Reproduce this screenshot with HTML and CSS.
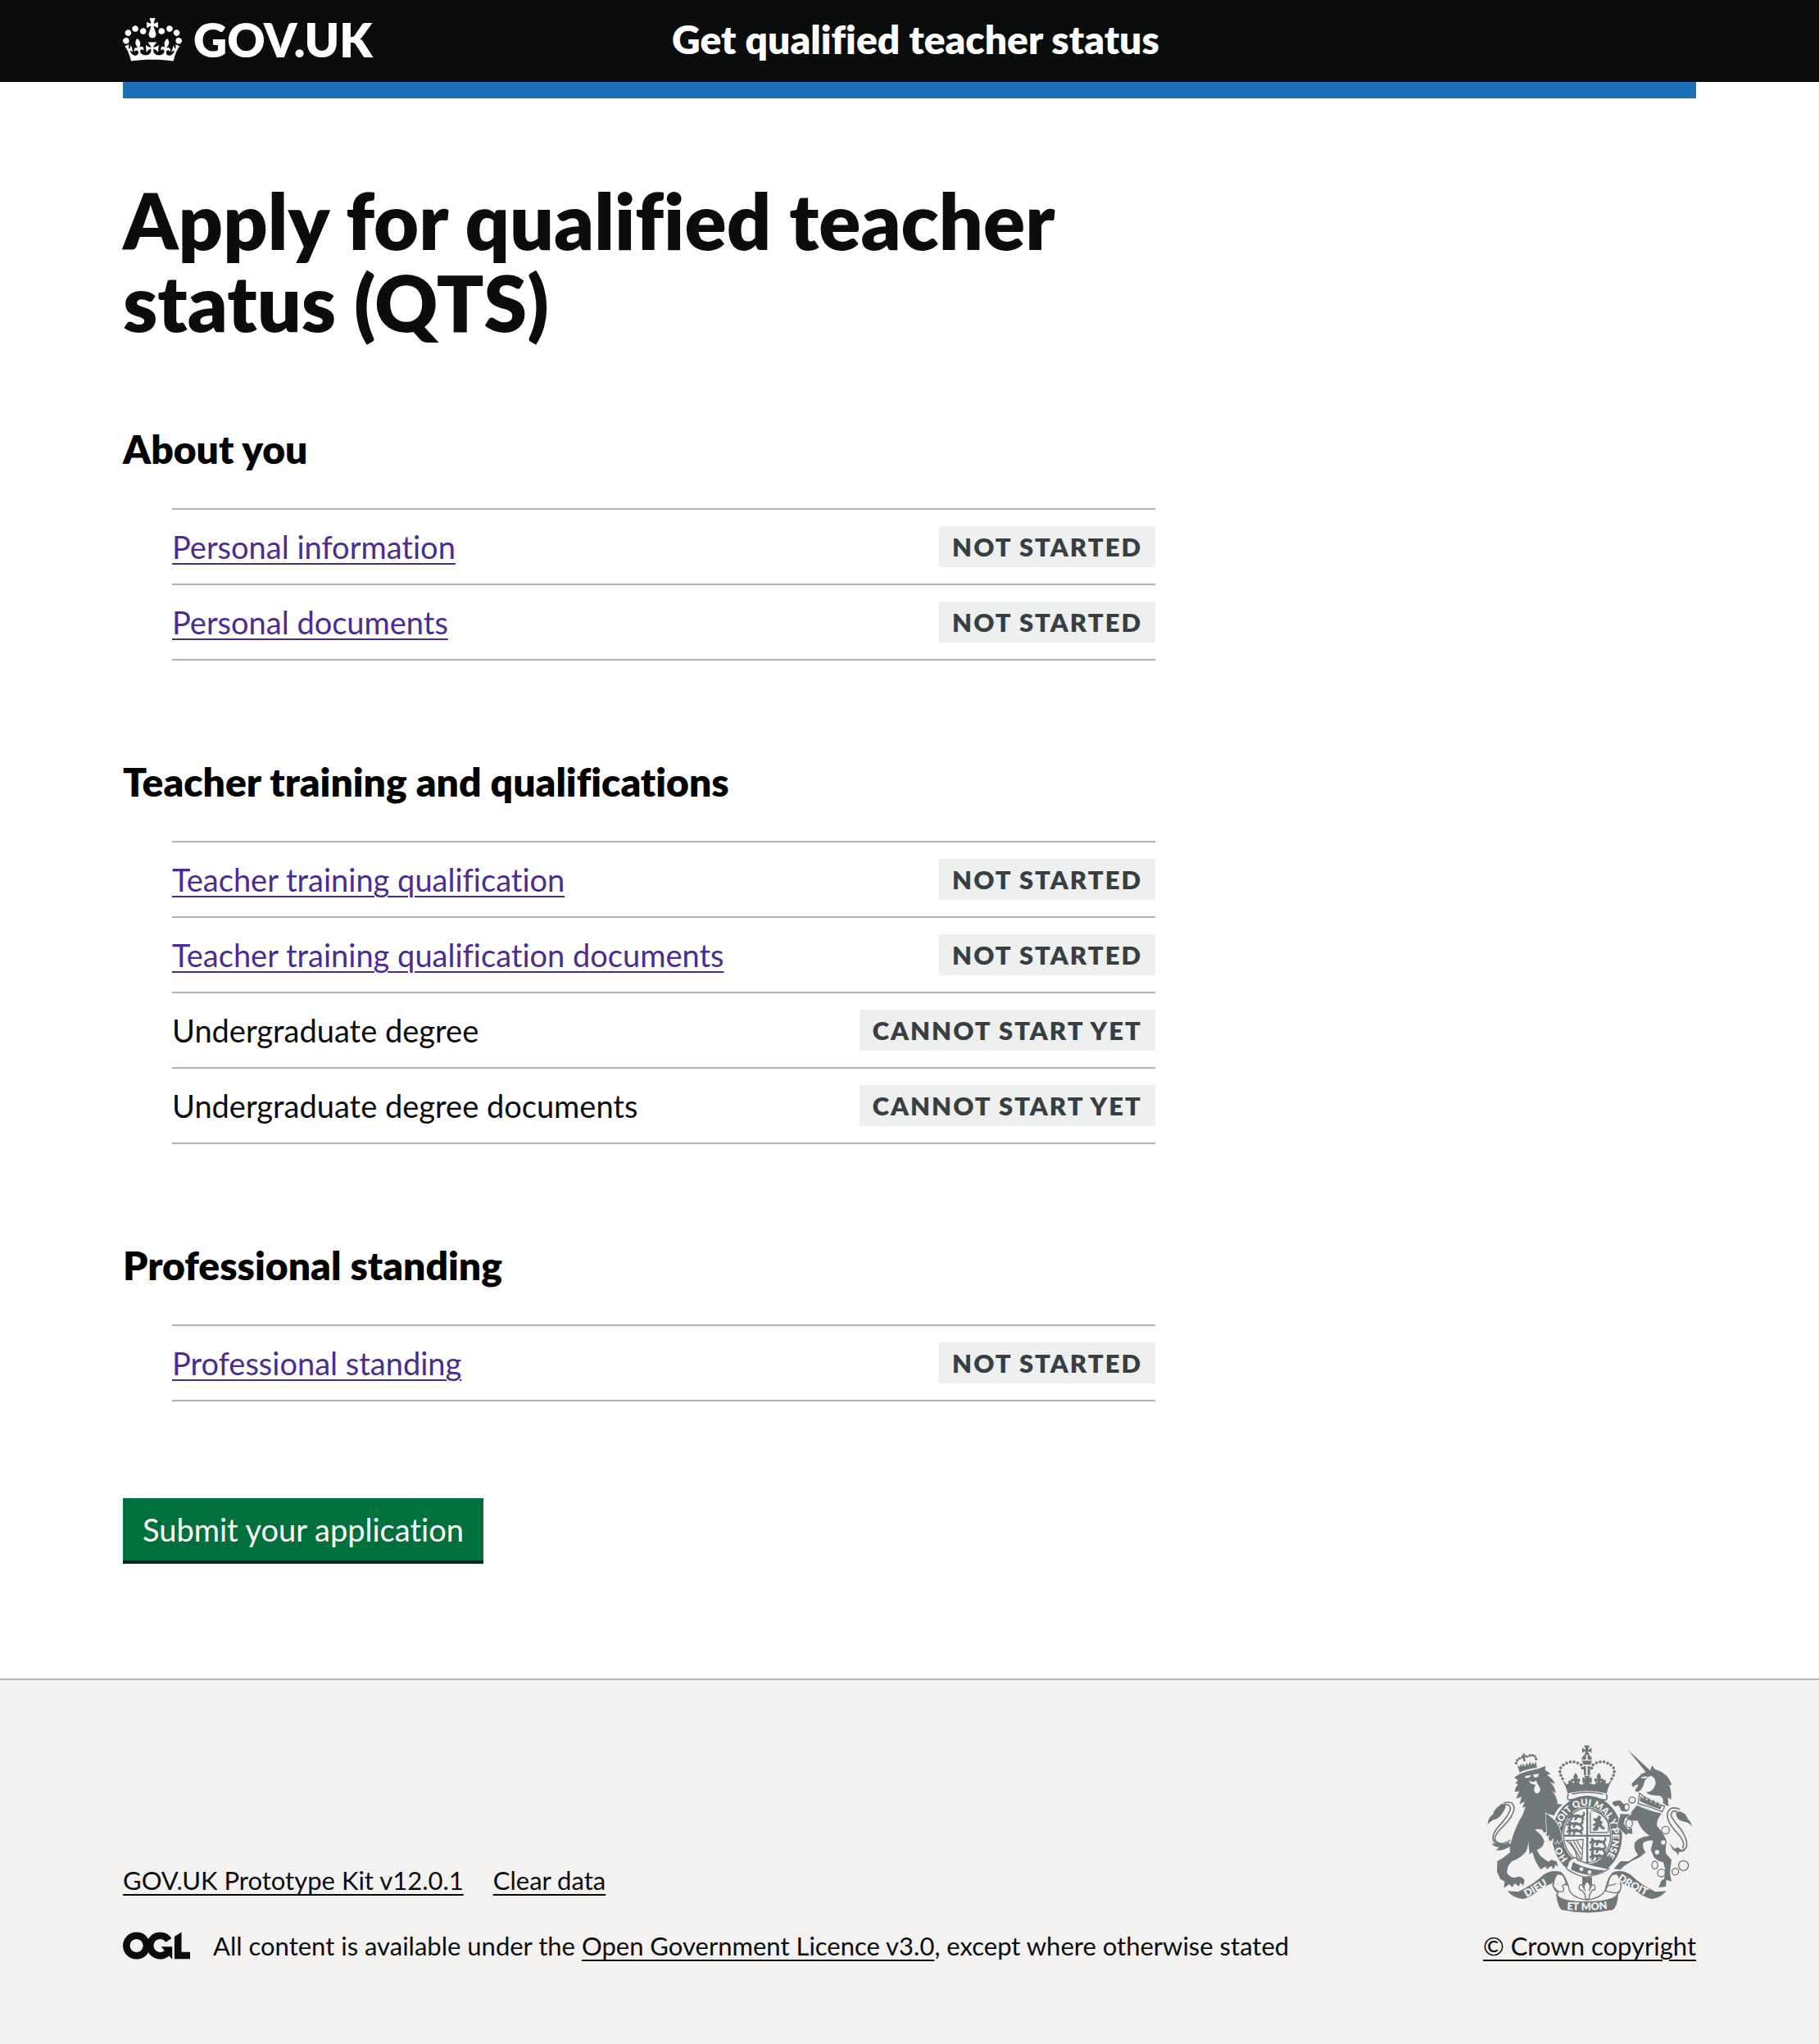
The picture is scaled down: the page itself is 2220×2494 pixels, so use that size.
FILE: index.html
```html
<!DOCTYPE html>
<html lang="en">
<head>
<meta charset="utf-8">
<meta name="viewport" content="width=device-width, initial-scale=1">
<title>Apply for qualified teacher status (QTS)</title>
<link rel="stylesheet" href="styles.css">
</head>
<body>
<header class="header">
  <div class="container header-row">
    <a class="logo" href="#">
      <svg class="logo-crown" viewBox="0 0 132 97" aria-hidden="true"><path fill="currentColor" d="M25 30.2c3.5 1.5 7.7-.2 9.1-3.7 1.5-3.6-.2-7.8-3.9-9.2-3.6-1.4-7.6.3-9.1 3.9-1.4 3.5.3 7.5 3.9 9zM9 39.5c3.6 1.5 7.8-.2 9.2-3.7 1.5-3.6-.2-7.8-3.9-9.1-3.6-1.5-7.6.2-9.1 3.8-1.4 3.5.3 7.5 3.8 9zM4.4 57.2c3.5 1.5 7.7-.2 9.1-3.8 1.5-3.6-.2-7.7-3.9-9.1-3.5-1.5-7.6.3-9.1 3.8-1.4 3.5.3 7.6 3.9 9.1zm38.3-21.4c3.5 1.5 7.7-.2 9.1-3.8 1.5-3.6-.2-7.7-3.9-9.1-3.6-1.5-7.6.3-9.1 3.8-1.3 3.6.4 7.7 3.9 9.1zm64.4-5.6c-3.6 1.5-7.8-.2-9.1-3.7-1.5-3.6.2-7.8 3.8-9.2 3.6-1.4 7.7.3 9.2 3.9 1.3 3.5-.4 7.5-3.9 9zm15.9 9.3c-3.6 1.5-7.7-.2-9.1-3.7-1.5-3.6.2-7.8 3.7-9.1 3.6-1.5 7.7.2 9.2 3.8 1.5 3.5-.3 7.5-3.8 9zm4.7 17.7c-3.6 1.5-7.8-.2-9.2-3.8-1.5-3.6.2-7.7 3.9-9.1 3.6-1.5 7.7.3 9.2 3.8 1.3 3.5-.4 7.6-3.9 9.1zM89.3 35.8c-3.6 1.5-7.8-.2-9.2-3.8-1.4-3.6.2-7.7 3.9-9.1 3.6-1.5 7.7.3 9.2 3.8 1.4 3.6-.3 7.7-3.9 9.1zM69.7 17.7l8.9 4.7V9.3l-8.9 2.8c-.2-.3-.5-.6-.9-.9L72.4 0H59.6l3.5 11.2c-.3.3-.6.5-.9.9l-8.8-2.8v13.1l8.8-4.7c.3.3.6.7.9.9l-5 15.4v.1c-.2.8-.4 1.6-.4 2.4 0 4.1 3.1 7.5 7 8.1h.2c.3 0 .7.1 1 .1.4 0 .7 0 1-.1h.2c4-.6 7.1-4.1 7.1-8.1 0-.8-.1-1.7-.4-2.4V34l-5.1-15.4c.4-.2.7-.6 1-.9zM66 92.8c16.9 0 32.8 1.1 47.1 3.2 4-16.9 8.9-26.7 14-33.5l-9.6-3.4c1 4.9 1.1 7.2 0 10.2-1.5-1.4-3-4.3-4.2-8.7L108.6 76c2.8-2 5-3.2 7.5-3.3-4.4 9.4-10 11.9-13.6 11.2-4.3-.8-6.3-4.6-5.6-7.9 1-4.7 5.7-5.9 8-.5 4.3-8.7-3-11.4-7.6-8.8 7.1-7.2 7.9-13.5 2.1-21.1-8 6.1-8.1 12.3-4.5 20.8-4.7-5.4-12.1-2.5-9.5 6.2 3.4-5.2 7.9-2 7.2 3.1-.6 4.3-6.4 7.8-13.5 7.2-10.3-.9-10.9-8-11.2-13.8 2.5-.5 7.1 1.8 11 7.3L80.2 60c-4.1 4.4-8 5.3-12.3 5.4 1.4-4.4 8-11.6 8-11.6H55.5s6.4 7.2 7.9 11.6c-4.2-.1-8-1-12.3-5.4l1.4 16.4c3.9-5.5 8.5-7.7 10.9-7.3-.3 5.8-.9 12.8-11.1 13.8-7.2.6-12.9-2.9-13.5-7.2-.7-5 3.8-8.3 7.1-3.1 2.7-8.7-4.6-11.6-9.4-6.2 3.7-8.5 3.6-14.7-4.6-20.8-5.8 7.6-5 13.9 2.2 21.1-4.7-2.6-11.9.1-7.7 8.8 2.3-5.5 7.1-4.2 8.1.5.7 3.3-1.3 7.1-5.7 7.9-3.5.7-9-1.8-13.5-11.2 2.5.1 4.7 1.3 7.5 3.3l-4.7-15.4c-1.2 4.4-2.7 7.2-4.3 8.7-1.1-3-.9-5.3 0-10.2l-9.5 3.4c5 6.9 9.9 16.7 14 33.5 14.8-2.1 30.8-3.2 47.7-3.2z"/></svg>
      <span class="logo-text">GOV.UK</span>
    </a>
    <a class="service-name" href="#">Get qualified teacher status</a>
  </div>
</header>
<div class="container"><div class="header-bar"></div></div>

<main class="container main">
  <div class="column">
    <h1 class="title">Apply for qualified teacher status (QTS)</h1>

    <section class="section">
      <h2 class="section-title">About you</h2>
      <ul class="tasks">
        <li class="task"><a class="task-link" href="#">Personal information</a><strong class="tag">Not started</strong></li>
        <li class="task"><a class="task-link" href="#">Personal documents</a><strong class="tag">Not started</strong></li>
      </ul>
    </section>

    <section class="section">
      <h2 class="section-title">Teacher training and qualifications</h2>
      <ul class="tasks">
        <li class="task"><a class="task-link" href="#">Teacher training qualification</a><strong class="tag">Not started</strong></li>
        <li class="task"><a class="task-link" href="#">Teacher training qualification documents</a><strong class="tag">Not started</strong></li>
        <li class="task"><span>Undergraduate degree</span><strong class="tag">Cannot start yet</strong></li>
        <li class="task"><span>Undergraduate degree documents</span><strong class="tag">Cannot start yet</strong></li>
      </ul>
    </section>

    <section class="section">
      <h2 class="section-title">Professional standing</h2>
      <ul class="tasks">
        <li class="task"><a class="task-link" href="#">Professional standing</a><strong class="tag">Not started</strong></li>
      </ul>
    </section>

    <button class="button" type="submit">Submit your application</button>
  </div>
</main>

<footer class="footer">
  <div class="container footer-row">
    <div class="footer-meta">
      <ul class="footer-links">
        <li><a class="footer-link" href="#">GOV.UK Prototype Kit v12.0.1</a></li>
        <li><a class="footer-link" href="#">Clear data</a></li>
      </ul>
      <div class="licence">
        <svg class="licence-logo" viewBox="0 0 483.2 195.7" aria-hidden="true"><path fill="currentColor" d="M421.5 142.8V.1l-50.7 32.3v161.1h112.4v-50.7zm-122.3-9.6A47.12 47.12 0 0 1 221 97.8c0-26 21.1-47.1 47.1-47.1 16.7 0 31.4 8.7 39.7 21.8l42.7-27.2A97.63 97.63 0 0 0 268.1 0c-36.5 0-68.3 20.1-85.1 49.7A98 98 0 0 0 97.8 0C43.9 0 0 43.9 0 97.8s43.9 97.8 97.8 97.8c36.5 0 68.3-20.1 85.1-49.7a97.76 97.76 0 0 0 149.6 25.4l19.4 22.2h3v-87.8h-80l24.3 27.5zM97.8 145c-26 0-47.1-21.1-47.1-47.1s21.1-47.1 47.1-47.1 47.1 21.1 47.1 47.1S123.8 145 97.8 145"/></svg>
        <span>All content is available under the <a class="footer-link" href="#">Open Government Licence v3.0</a>, except where otherwise stated</span>
      </div>
    </div>
    <a class="copyright" href="#">
      <svg class="crest" viewBox="102 93 750 612" aria-hidden="true">
        <defs>
          <path id="garter" d="M398 508A97 113 0 1 1 510 525"/>
          <path id="scroll-left" d="M246 648Q300 620 352 582"/>
          <path id="scroll-mid" d="M374 691Q468 701 562 688"/>
          <path id="scroll-right" d="M578 584Q640 624 704 652"/>
          <g id="cross"><path d="M-5 0Q-5-9-11-17H11Q5-9 5 0Q9-1 17-10V11Q9 4 5 4Q5 10 10 18H-10Q-5 10-5 4Q-9 4-17 11V-10Q-9-1-5 0Z"/></g>
          <g id="fleur"><path d="M0-20Q13-8 5 4Q14-4 17 5Q17 14 10 12Q8 7 5 11L8 24H-8L-5 11Q-8 7-10 12Q-17 14-17 5Q-14-4-5 4Q-13-8 0-20Z"/></g>
          <g id="beast"><path d="M0 8L8 2L7-6L15-8L20 0L38-2L50 3L58-5L55-11H62L64 0L58 9L62 18L53 19L50 12L36 10L31 20H23L27 12L20 8L15 20H6L11 10L5 14Z"/></g>
        </defs>
        <g class="crest-ink">
          <!-- lion's crown -->
          <path d="M213 163L221 171L225 160L231 169L235 157L240 170L247 155L252 166L259 151L263 164L269 154L274 163L281 151L284 174Q250 177 220 191Z"/>
          <circle cx="208" cy="157" r="5"/><circle cx="212" cy="147" r="5"/><circle cx="220" cy="140" r="5"/><circle cx="229" cy="137" r="4"/><circle cx="249" cy="133" r="4"/><circle cx="258" cy="129" r="5"/><circle cx="268" cy="128" r="5"/><circle cx="277" cy="132" r="5"/><circle cx="281" cy="142" r="5"/>
          <path d="M228 126L234 128L233 121L241 122L239 129L246 127V136L240 135L243 149L235 151L233 136L228 137Z"/>
          <!-- lion -->
          <path d="M201 209L222 196Q258 183 288 178L316 167L314 182L335 196L321 200Q342 213 351 233L332 226Q351 243 353 267L338 258Q357 275 360 306L378 309Q357 324 347 349L317 341Q348 359 364 388L378 434L365 451L358 438L355 451L345 446V432L332 444L326 432L332 420L321 426L316 416L327 407L309 411L304 401Q291 395 277 401Q306 421 311 443Q309 465 285 474Q289 492 310 507L327 518L337 510L356 517L362 536L352 529L345 545L336 533L321 545L316 535L298 546L292 538L278 514L267 482L257 491L252 434Q254 462 243 482Q226 503 193 516Q174 532 175 560Q191 580 207 575Q225 567 239 585L234 606L224 594L218 608L203 597L194 611L183 600L163 614L166 590L151 582L138 555L139 516Q168 500 187 482Q181 466 190 444Q204 392 232 346L243 316L231 320L239 298L221 307L228 280L208 287L219 260L202 262Q204 246 215 234L205 231L215 220Z"/>
          <path d="M103 383Q105 356 123 345Q128 324 152 309Q151 302 165 308L170 318Q155 351 137 361Q115 366 103 383Z"/>
          <path d="M119 448Q127 456 139 447Q159 459 181 446L189 458Q170 477 134 476L146 464Q123 466 119 448Z"/>
          <!-- unicorn -->
          <path d="M617 108L699 184L706 165L716 179Q765 193 778 237L769 238Q779 265 775 290L764 283L766 315Q754 310 745 302Q751 286 733 276Q694 276 684 263Q708 263 718 236Q722 211 701 203Q681 211 677 229Q675 242 664 256L652 263L643 258L650 245L633 242L631 232L668 196L683 190Z"/>
          <path d="M655 306Q692 325 742 339Q721 365 724 386Q755 424 759 444Q754 463 757 488L777 511L771 558L777 590L758 584L756 609L729 612L741 586L750 581L754 548L747 520Q722 514 712 500L701 473L710 441Q689 436 672 451Q673 473 682 483Q665 502 631 515L604 533L590 547L566 544L590 516L621 516L655 493Q637 475 642 449Q657 426 697 423Q666 404 652 367L638 368L608 357L602 378L617 400L632 394L634 416L616 414L612 421L579 389L590 343L627 344L632 333Z"/>
          <path d="M564 296L589 293Q598 307 616 310L616 334L594 333L584 312L570 315L560 305Z"/>
          <path d="M852 389Q842 373 823 371Q800 369 793 345Q794 332 808 334Q829 339 836 361Q848 370 852 389Z"/>
          <path d="M769 449L782 474L795 483L801 495L804 482Q830 484 829 466L814 475L800 465L788 470Z"/>
          <!-- royal crown -->
          <use href="#cross" x="467" y="109"/>
          <path d="M448 144Q450 127 464 126V144ZM470 126Q484 128 486 144H470ZM448 148H486L481 163H455ZM456 168H464V201H456ZM470 168H479V201H470Z"/>
          <path d="M376 218Q388 227 391 234Q405 232 398 224Q407 214 413 226L425 236Q430 221 440 222Q434 234 450 236L458 228L451 208Q468 218 484 207L477 228Q481 236 499 234Q496 214 508 234L520 226Q530 212 538 223Q530 233 545 232Q551 221 560 217Q546 239 540 268Q468 250 397 268Q390 238 376 218Z"/>
          <use href="#fleur" x="426" y="213"/><use href="#fleur" x="511" y="213"/><use href="#cross" x="468" y="220"/>
          <path class="stroke dots" d="M378 214Q360 185 376 168Q408 140 444 161Q454 168 450 184M558 214Q576 185 560 168Q528 140 492 161Q482 168 486 184"/>
          <path class="stroke" d="M400 270Q392 285 401 292L423 289M537 270Q546 285 536 292L514 289M412 270Q468 258 526 270"/>
          <!-- garter and shield -->
          <ellipse cx="468" cy="423" rx="128" ry="147"/>
          <ellipse class="paper" cx="468" cy="421" rx="90" ry="105"/>
          <ellipse class="stroke thin" cx="468" cy="421" rx="86" ry="100"/>
          <path d="M465 318H472V526H465ZM382 419H554V426H382Z"/>
          <use href="#beast" x="397" y="346"/><use href="#beast" x="391" y="374"/><use href="#beast" x="391" y="399"/>
          <use href="#beast" x="475" y="439"/><use href="#beast" x="475" y="466"/><use href="#beast" x="475" y="492"/>
          <path class="stroke thin" d="M480 335V411H543M482 329Q524 337 546 374V411"/>
          <path d="M487 399L497 389L487 382L500 374L488 360L504 358L511 347L520 354L516 366L526 373L520 382L535 396L526 401L512 389L507 403L493 406Z"/>
          <path class="stroke thin" d="M392 440Q420 440 453 436L449 510Q434 513 429 493Q420 461 392 440ZM405 442L445 508M418 441L446 492M430 440L448 471"/>
        </g>
        <g class="crest-text">
          <text font-size="34"><textPath href="#garter">HO</textPath></text>
          <text font-size="34"><textPath href="#garter" startOffset="124">SOIT QUI MAL Y PENSE</textPath></text>
        </g>
        <g class="crest-paper">
          <path d="M243 203L264 201L254 211H239ZM270 199L292 196L287 208L274 209ZM255 219Q269 232 280 220L289 237L297 251Q295 268 284 268Q273 267 274 249L279 236L261 232Z"/>
          <path d="M663 211Q677 202 691 207Q679 217 663 211ZM638 239L656 235L651 247Z"/>
        </g>
        <g class="crest-ink">
          <!-- forelegs that rest on the garter -->
          <path class="limb" d="M317 341Q348 359 364 388L378 434L365 451L358 438L355 451L345 446V432L332 444L326 432L332 420L321 426Z"/>
          <path class="limb" d="M590 343L579 389L612 421L616 414L634 416L632 394L617 400L602 378L608 357L627 344Z"/>
          <path class="stroke" d="M162 304Q196 291 201 321Q200 350 159 390Q123 424 132 440Q150 462 187 439M157 311Q188 302 187 326Q180 350 142 391Q103 439 145 457"/>
          <path class="stroke" d="M808 326Q768 310 762 343Q759 369 791 405Q832 447 817 468M798 335Q777 324 775 350Q788 373 812 400Q842 447 829 470"/>
          <path class="edge" d="M652 309Q695 330 748 340"/>
          <path class="outlined" d="M660 267Q692 295 752 315L743 335Q702 317 655 304Z"/>
          <path d="M664 276L673 287L679 277L685 294L696 285L701 301L712 290L717 308L728 298L732 315L742 309L737 326Q699 315 661 296Z"/>
          <g class="outlined">
            <ellipse cx="633" cy="292" rx="12" ry="11"/><ellipse cx="613" cy="318" rx="9" ry="12"/><ellipse cx="622" cy="378" rx="12" ry="15"/><circle cx="755" cy="402" r="14"/><circle cx="747" cy="447" r="10"/><circle cx="724" cy="483" r="10"/><ellipse cx="716" cy="530" rx="11" ry="14"/><circle cx="740" cy="559" r="14"/><circle cx="791" cy="554" r="12"/><circle cx="821" cy="532" r="18"/>
          </g>
          <!-- strap and buckle -->
          <path class="outlined" d="M427 502Q399 507 396 533Q386 541 403 551Q430 568 459 574L477 571Q515 565 547 544L486 530L434 513Z"/>
          <path d="M416 518Q468 548 532 549Q484 584 409 547Z"/>
          <!-- motto scroll -->
          <path d="M176 625L215 628Q272 601 309 565Q340 544 374 556Q390 571 401 607L388 601Q370 590 348 604L341 598L352 590L301 615Q260 650 232 654Q198 652 176 625Z"/>
          <path d="M758 625L719 628Q662 601 627 565Q594 544 563 556Q545 571 536 607L548 601Q568 590 588 604L594 598L584 590L635 615Q674 650 706 654Q736 652 758 625Z"/>
          <path class="outlined" d="M341 598Q346 620 361 632L358 642Q365 652 388 660Q468 674 548 660Q578 649 578 637Q594 625 592 600Q594 634 565 632L536 625Q536 602 565 602L580 594Q546 586 537 610Q532 648 468 658Q400 648 400 606Q390 597 377 606Q392 630 365 628Q345 615 341 598Z"/>
          <path d="M354 632Q364 663 468 663Q571 662 582 630Q580 682 562 694Q468 714 374 694Q359 678 354 632Z"/>
          <path d="M450 574H486V604H478L468 589L459 604H450Z"/>
          <path class="outlined" d="M468 589Q486 606 475 625Q489 590 497 608Q500 624 487 622Q480 632 476 640Q478 654 468 655Q459 654 461 640Q457 632 449 622Q437 624 439 608Q447 590 461 625Q449 606 468 589Z"/>
        </g>
        <g class="crest-paper">
          <circle cx="447" cy="545" r="7"/><circle cx="477" cy="556" r="7"/>
          <path d="M360 565L377 568Q391 591 388 601Q370 590 348 604Q346 586 360 565ZM577 565L559 568Q545 591 548 601Q568 590 588 604Q590 586 577 565Z"/>
        </g>
        <g class="crest-text">
          <text font-size="38"><textPath href="#scroll-left">DIEU</textPath></text>
          <text font-size="38"><textPath href="#scroll-mid" startOffset="50%" text-anchor="middle">ET MON</textPath></text>
          <text font-size="38"><textPath href="#scroll-right">DROIT</textPath></text>
        </g>
      </svg>
      <span class="copyright-text">© Crown copyright</span>
    </a>
  </div>
</footer>
</body>
</html>
```
FILE: styles.css
```css
* { box-sizing: border-box; }

html { background: #f3f2f1; }

body {
  margin: 0;
  background: #fff;
  color: #0b0c0c;
  font-family: Lato, "Noto Sans", sans-serif;
  font-size: 38px;
  font-variant-ligatures: none;
  line-height: 50px;
}

ul { list-style: none; margin: 0; padding: 0; }
a { color: inherit; }

.container {
  width: min(1920px, 100% - 60px);
  margin: 0 auto;
}

.header { background: #0b0c0c; color: #fff; }
.header-row {
  display: grid;
  grid-template-columns: 1fr 2fr;
  column-gap: 45px;
  align-items: center;
  min-height: 100px;
  padding-bottom: 4px;
}
.logo {
  display: flex;
  align-items: center;
  gap: 14px;
  font-size: 57px;
  font-weight: 800;
  line-height: 60px;
  text-decoration: none;
}
.logo-crown { width: 72px; height: 53px; }
.service-name {
  font-size: 48px;
  font-weight: 800;
  line-height: 60px;
  text-decoration: none;
}
.header-bar { height: 20px; background: #1d70b8; }

.main { padding: 98px 0 140px; }
.column { max-width: 1260px; }

.title {
  margin: 0 0 100px;
  font-size: 95px;
  font-weight: 800;
  line-height: 100px;
}
.section { margin-bottom: 118px; }
.section-title {
  margin: 0 0 42px;
  color: #000;
  font-size: 48px;
  font-weight: 800;
  line-height: 60px;
}
.tasks {
  margin-left: 60px;
  border-top: 2px solid #b1b4b6;
}
.task {
  display: flex;
  align-items: center;
  justify-content: space-between;
  min-height: 92px;
  padding: 20px 0;
  border-bottom: 2px solid #b1b4b6;
}
.task-link {
  color: #4c2c92;
  text-decoration-thickness: 2px;
  text-underline-offset: 5px;
}
.tag {
  padding: 5px 16px;
  background: #eeefef;
  color: #383f43;
  font-size: 31px;
  font-weight: 800;
  line-height: 40px;
  letter-spacing: 2px;
  text-transform: uppercase;
}
.button {
  display: block;
  padding: 13px 24px;
  border: 0;
  border-bottom: 4px solid #002d18;
  background: #00703c;
  color: #fff;
  font: inherit;
}

.footer {
  padding: 80px 0;
  border-top: 2px solid #b1b4b6;
  background: #f3f2f1;
  font-size: 31px;
  line-height: 40px;
}
.footer-row {
  display: flex;
  align-items: flex-end;
  justify-content: space-between;
  gap: 30px;
}
.footer-links { display: flex; gap: 36px; margin-bottom: 40px; }
.footer-link, .copyright {
  text-decoration-thickness: 2px;
  text-underline-offset: 5px;
}
.licence { display: flex; align-items: center; gap: 28px; }
.licence-logo { flex: none; width: 82px; height: 34px; }
.copyright {
  display: flex;
  flex: none;
  flex-direction: column;
  align-items: center;
  gap: 20px;
}
.crest { width: 250px; height: 204px; overflow: visible; }
.crest-ink { fill: #6f777b; stroke: none; }
.crest-paper { fill: #f3f2f1; }
.crest-text { fill: #f3f2f1; font-weight: 800; }
.paper { fill: #f3f2f1; }
.stroke { fill: none; stroke: #6f777b; stroke-width: 5; }
.thin { stroke-width: 4; }
.dots { stroke-width: 11; stroke-linecap: round; stroke-dasharray: 0 14; }
.edge { fill: none; stroke: #f3f2f1; stroke-width: 5; }
.limb { stroke: #f3f2f1; stroke-width: 4; paint-order: stroke; }
.outlined { fill: #f3f2f1; stroke: #6f777b; stroke-width: 4; }
```
